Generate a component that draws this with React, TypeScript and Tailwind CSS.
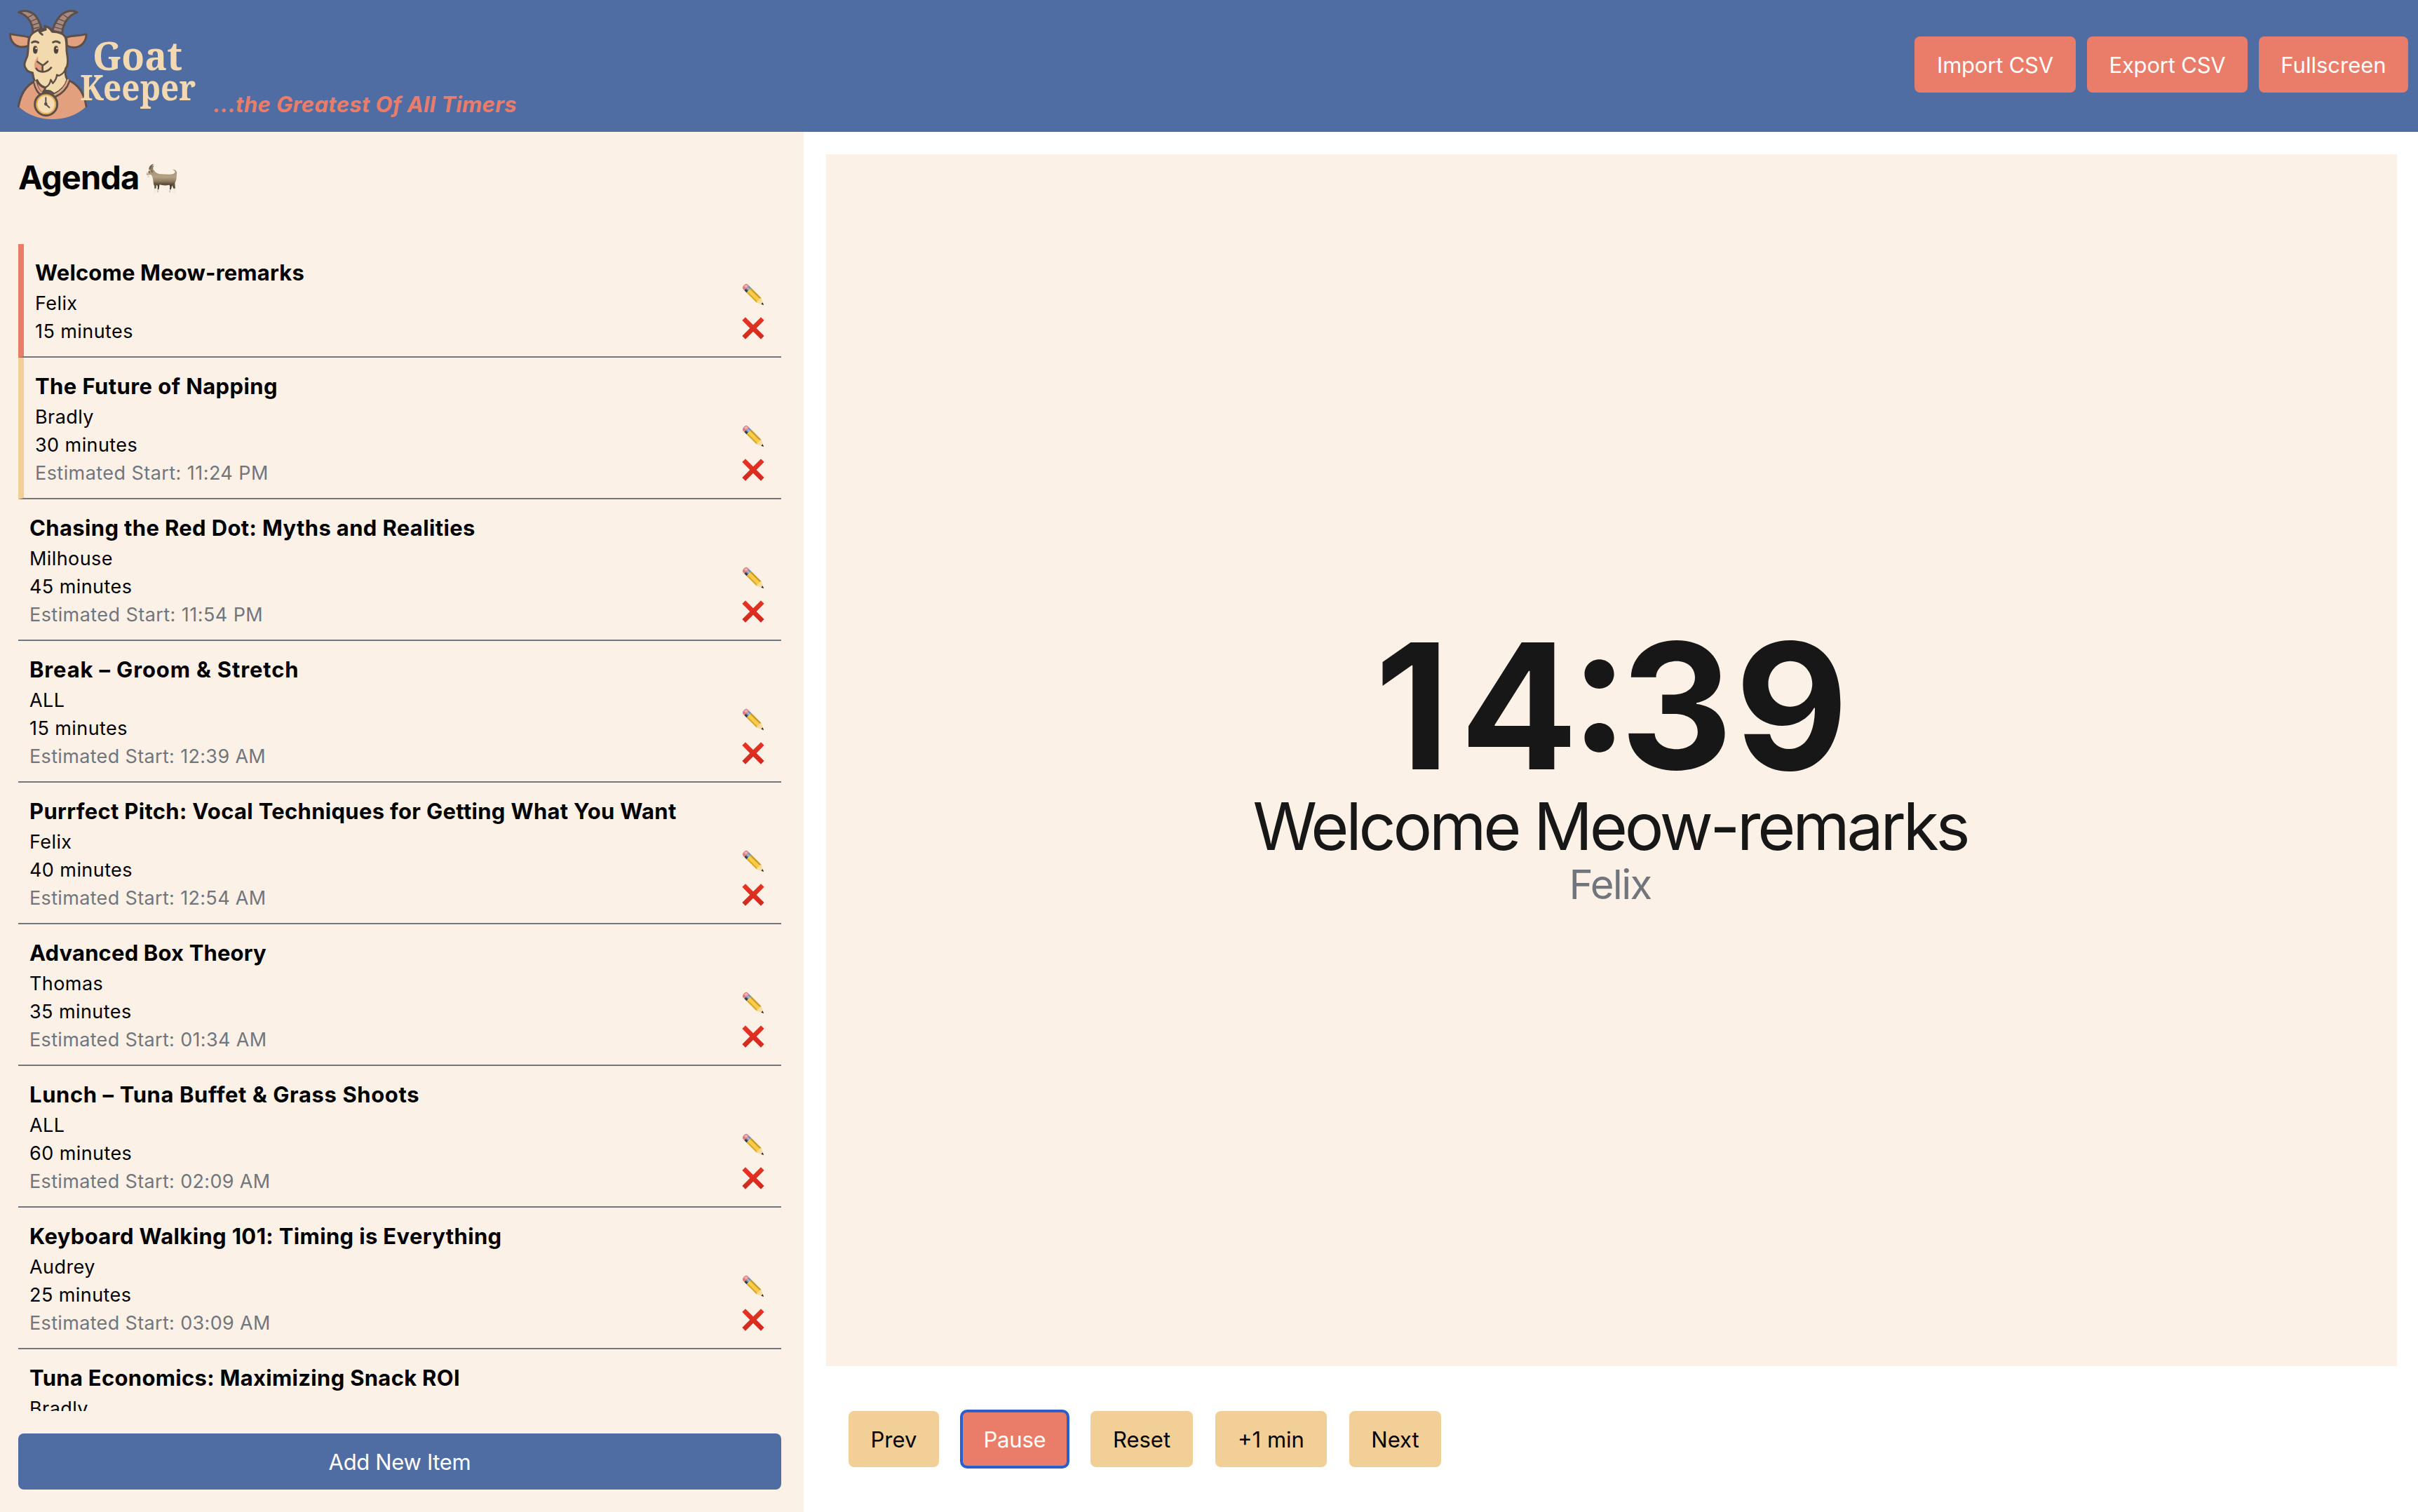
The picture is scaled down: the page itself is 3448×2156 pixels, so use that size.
type AgendaItem = {
  title: string;
  tracking: string;
  speaker: string;
  minutes: number;
  start?: string;
};

const agenda: AgendaItem[] = [
  { title: "Welcome Meow-remarks", tracking: "tracking-[0.16px]", speaker: "Felix", minutes: 15 },
  { title: "The Future of Napping", tracking: "tracking-[0.42px]", speaker: "Bradly", minutes: 30, start: "11:24 PM" },
  { title: "Chasing the Red Dot: Myths and Realities", tracking: "tracking-[0.35px]", speaker: "Milhouse", minutes: 45, start: "11:54 PM" },
  { title: "Break – Groom & Stretch", tracking: "tracking-[0.85px]", speaker: "ALL", minutes: 15, start: "12:39 AM" },
  { title: "Purrfect Pitch: Vocal Techniques for Getting What You Want", tracking: "tracking-[0.31px]", speaker: "Felix", minutes: 40, start: "12:54 AM" },
  { title: "Advanced Box Theory", tracking: "tracking-[0.15px]", speaker: "Thomas", minutes: 35, start: "01:34 AM" },
  { title: "Lunch – Tuna Buffet & Grass Shoots", tracking: "tracking-[0.6px]", speaker: "ALL", minutes: 60, start: "02:09 AM" },
  { title: "Keyboard Walking 101: Timing is Everything", tracking: "tracking-[0.35px]", speaker: "Audrey", minutes: 25, start: "03:09 AM" },
  { title: "Tuna Economics: Maximizing Snack ROI", tracking: "tracking-[0.3px]", speaker: "Bradly", minutes: 20, start: "03:34 AM" },
];

function Logo() {
  return (
    <svg width="300" height="188" viewBox="0 0 900 564" className="block shrink-0" role="img" aria-label="Goat Keeper">
      <g stroke="#5b4f48" strokeWidth="9" strokeLinejoin="round" strokeLinecap="round">
        {/* shoulders */}
        <path
          d="M79 455 C88 405 110 366 150 347 L292 343 C335 360 362 402 369 455 C330 494 275 510 221 510 C165 509 118 491 79 455 Z"
          fill="#e3a07f"
          stroke="none"
        />
        <path d="M79 455 C88 405 110 366 150 347 M292 343 C335 360 362 402 369 455" fill="none" />
        {/* horns */}
        <path d="M80 53 C108 38 145 52 161 80 C171 98 176 114 179 134 L141 140 C141 100 121 66 80 53 Z" fill="#a98880" />
        <path d="M330 53 C302 38 266 52 248 80 C235 98 229 114 224 132 L266 142 C269 100 292 66 330 53 Z" fill="#a98880" />
        <path
          d="M121 74 L138 64 M131 92 L158 80 M138 108 L167 98 M141 123 L174 115 M289 75 L273 65 M279 92 L253 82 M271 109 L241 99 M267 125 L233 116"
          fill="none"
          strokeWidth="4"
        />
        {/* ears */}
        <path d="M124 160 C98 151 70 152 43 145 C43 180 68 202 96 201 C106 201 115 199 122 195 Z" fill="#e3a07f" />
        <path d="M284 160 C310 151 340 154 369 146 C370 178 346 203 316 203 C304 203 294 199 286 195 Z" fill="#e3a07f" />
        {/* head and neck */}
        <path
          d="M163 128 C150 136 130 142 125 165 C119 190 122 215 117 239 C111 257 99 271 107 287 C113 297 116 309 139 311 C143 327 142 341 152 353 L158 345 C164 358 178 372 194 375 L190 388 L214 390 L232 402 C262 388 281 370 288 341 C279 326 278 305 281 293 C294 279 291 256 288 237 C281 211 289 177 278 156 C267 141 247 137 225 136 C220 122 208 115 192 112 L195 127 L177 124 L171 137 Z"
          fill="#f3d9ae"
        />
        <path d="M163 128 L172 124 L178 133 L195 126 L192 112 C206 116 216 123 222 134 M171 140 L181 148" fill="none" />
        {/* beard */}
        <path
          d="M139 311 C142 328 145 340 152 352 L159 342 C166 358 178 370 194 374 C206 369 214 362 217 341 L226 356 C237 344 243 332 243 320 L252 324 C268 317 278 306 282 290"
          fill="none"
          strokeWidth="7"
        />
        {/* lanyard */}
        <path d="M150 353 C156 378 164 396 181 404 M292 346 C282 378 260 398 234 410" fill="none" strokeWidth="18" strokeLinecap="butt" />
        <path d="M151 350 C157 376 165 392 182 401 M291 342 C281 375 259 395 232 407" fill="none" stroke="#e3a07f" strokeWidth="8" />
        {/* muzzle shading */}
        <path
          d="M162 241 C146 262 143 284 151 296 C158 304 170 306 181 303 L181 279 C167 276 160 268 164 260 Z"
          fill="#e3a07f"
          stroke="none"
        />
        {/* face */}
        <path d="M137 182 C145 176 156 177 164 182 M227 181 C236 175 247 177 255 183" fill="none" />
        <path d="M160 264 L177 276 C181 279 186 279 190 275 L204 263 M182 279 L182 303 M155 293 C165 311 199 314 219 289" fill="none" strokeWidth="8" />
        <ellipse cx="151" cy="213" rx="8" ry="15" fill="#4a3e3b" strokeWidth="4" />
        <ellipse cx="240" cy="213" rx="8" ry="15" fill="#4a3e3b" strokeWidth="4" />
        {/* stopwatch */}
        <path d="M186 390 L209 390 L209 401 L186 401 Z" fill="#7b675a" />
        <circle cx="197" cy="446" r="48" fill="#e5ac52" />
        <circle cx="197" cy="446" r="37" fill="#f5dcb3" stroke="none" />
        <path d="M196 418 L196 446 L211 460" fill="none" strokeWidth="6" />
        <circle cx="196" cy="445" r="5" fill="#5b4f48" strokeWidth="4" />
      </g>
      <circle cx="155" cy="207" r="4" fill="#f3d9ae" />
      <circle cx="244" cy="207" r="4" fill="#f3d9ae" />
      <g fill="#f3d9b1" fontWeight="700" className="font-['Noto_Serif','DejaVu_Serif',serif]">
        <text x="396" y="301" fontSize="167" textLength="384" lengthAdjust="spacingAndGlyphs">
          Goat
        </text>
        <text x="343" y="430" fontSize="155" textLength="495" lengthAdjust="spacingAndGlyphs">
          Keeper
        </text>
      </g>
    </svg>
  );
}

function GoatIcon() {
  return (
    <svg width="46" height="44" viewBox="0 0 138 132" className="block shrink-0" aria-hidden="true">
      <defs>
        <linearGradient id="fur" x1="0" y1="0" x2="0" y2="1">
          <stop offset="0" stopColor="#a39176" />
          <stop offset="0.4" stopColor="#b5a183" />
          <stop offset="0.62" stopColor="#8f7c61" />
          <stop offset="0.75" stopColor="#5f503e" />
        </linearGradient>
      </defs>
      {/* far legs */}
      <path d="M102 82 L106 100 L105 112 L110 112 L113 102 L116 82 Z M48 84 L54 100 L53 112 L58 112 L60 102 L62 84 Z" fill="#40362c" />
      <path d="M105 112 L110 112 L108 124 L101 124 Z M53 112 L58 112 L57 124 L50 124 Z" fill="#cfc6b8" />
      {/* horns */}
      <path d="M16 27 C15 13 24 4 37 2 C29 9 26 18 25 26 Z" fill="#6f624f" />
      <path d="M23 26 C23 17 29 9 38 8 C33 15 34 22 34 29 Z" fill="#8a7b64" />
      {/* body */}
      <path
        d="M22 27 C30 22 36 27 40 32 C46 41 56 45 68 46 L104 47 C113 47 121 46 125 42 C130 36 128 30 117 27 C130 24 138 36 135 47 C135 64 132 76 127 84 L129 108 L121 108 L119 102 L112 90 C98 95 77 96 63 91 L48 94 L46 108 L39 108 L40 98 C33 87 36 72 31 59 C28 50 26 49 21 48 L14 47 L9 51 C4 48 5 44 8 40 L15 32 Z"
        fill="url(#fur)"
      />
      <path d="M26 27 C33 28 33 33 30 42 C27 38 25 33 26 27 Z" fill="#6f624f" />
      {/* beard */}
      <path d="M10 49 L19 48 L15 63 L11 57 Z" fill="#dedad0" />
      {/* near shins */}
      <path d="M39 107 L46 107 L44 125 L35 127 L38 121 Z M121 107 L129 107 L129 127 L118 127 L122 121 Z" fill="#efe9df" />
      <path d="M10 36 L15 34 L13 44 L9 45 Z" fill="#e5e0d6" />
      <circle cx="17" cy="37" r="2.5" fill="#2e2822" />
    </svg>
  );
}

function PencilIcon() {
  return (
    <svg width="32" height="32" viewBox="0 0 96 96" className="block" aria-hidden="true">
      <g transform="rotate(45 48 48)">
        <path d="M0 34 h10 v28 h-10 C-10 60 -12 36 0 34 Z" fill="#d97d80" />
        <path d="M-1 38 h8 v12 h-12 C-6 45 -5 40 -1 38 Z" fill="#f3b0b2" />
        <path d="M9 34 h13 v28 h-13 Z" fill="#7590b8" />
        <path d="M9 41 h13 v7 h-13 Z" fill="#a5b6cf" />
        <path d="M9 53 h13 v9 h-13 Z" fill="#3a3b41" />
        <path d="M22 34 h62 v28 h-62 Z" fill="#f8cd45" />
        <path d="M22 34 h62 v7 h-62 Z" fill="#c9982f" />
        <path d="M22 56 h62 v6 h-62 Z" fill="#dba62f" />
        <path d="M84 34 L111 48 L84 62 L79 56 L83 48 L79 40 Z" fill="#f6dca0" />
        <path d="M101 43 L112 48 L101 53 Z" fill="#2a2626" />
      </g>
    </svg>
  );
}

function CrossIcon() {
  return (
    <svg width="32" height="32" viewBox="0 0 96 96" className="block" aria-hidden="true">
      <defs>
        <linearGradient id="cross" x1="0" y1="0" x2="0" y2="1">
          <stop offset="0" stopColor="#e93323" />
          <stop offset="1" stopColor="#d02a1e" />
        </linearGradient>
      </defs>
      <path
        d="M15 1 L48 34 L81 1 L95 14 L62 48 L95 81 L81 95 L48 62 L15 95 L1 81 L34 48 L1 14 Z"
        fill="url(#cross)"
      />
    </svg>
  );
}

const stripes = ["border-l-8 border-l-[#e97d69]", "border-l-8 border-l-[#f2cf97]"];

function AgendaRow({ item, index }: { item: AgendaItem; index: number }) {
  return (
    <li className={`flex shrink-0 items-end justify-between border-b-2 border-b-[#71767d] p-4 ${stripes[index] ?? ""}`}>
      <div className="mt-px -mb-px text-[27px] leading-[40px] tracking-[0.42px]">
        <h3 className={`text-[31px] leading-[48px] font-bold whitespace-nowrap ${item.tracking}`}>{item.title}</h3>
        <p>{item.speaker}</p>
        <p>{item.minutes} minutes</p>
        {item.start && (
          <p className={`text-[#71767d] ${item.start.endsWith("AM") ? "tracking-[0.34px]" : "tracking-[0.44px]"}`}>
            Estimated Start: {item.start}
          </p>
        )}
      </div>
      <div className="flex flex-col">
        <button aria-label="Edit" className="grid size-12 place-items-center">
          <PencilIcon />
        </button>
        <button aria-label="Delete" className="grid size-12 place-items-center">
          <CrossIcon />
        </button>
      </div>
    </li>
  );
}

const button = "h-20 rounded-lg pt-px text-center text-[31px] leading-[48px] whitespace-nowrap";

export default function App() {
  return (
    <div className="flex h-[2156px] w-[3448px] flex-col overflow-hidden bg-white font-['Inter',sans-serif] text-black">
      <header className="flex h-[188px] shrink-0 items-center bg-[#506da3] pr-[14px]">
        <Logo />
        <p className="self-end pb-[18px] pl-1 text-[31px] leading-[42px] font-bold tracking-[0.35px] text-[#e97d69] italic">
          ...the Greatest Of All Timers
        </p>
        <div className="ml-auto flex gap-4 pb-1 text-white">
          <button className={`${button} w-[230px] bg-[#e97d69] tracking-[-0.2px]`}>Import CSV</button>
          <button className={`${button} w-[229px] bg-[#e97d69] tracking-[-0.2px]`}>Export CSV</button>
          <button className={`${button} w-[213px] bg-[#e97d69]`}>Fullscreen</button>
        </div>
      </header>
      <div className="flex min-h-0 flex-1">
        <aside className="flex w-[1146px] shrink-0 flex-col bg-[#fcf1e6] py-8 pr-8 pl-[26px]">
          <h2 className="flex h-[66px] items-center gap-[9px] text-[47px] leading-[66px] font-bold tracking-[-0.92px]">
            Agenda
            <span className="pt-[3px]">
              <GoatIcon />
            </span>
          </h2>
          <ul className="mt-[62px] flex h-[1664px] shrink-0 flex-col overflow-hidden">
            {agenda.map((item, i) => (
              <AgendaRow key={item.title} item={item} index={i} />
            ))}
          </ul>
          <button className={`${button} mt-8 shrink-0 bg-[#506da3] tracking-[-0.34px] text-white`}>Add New Item</button>
        </aside>
        <main className="flex min-w-0 flex-1 flex-col pt-8 pr-[30px] pl-8">
          <section className="flex h-[1728px] flex-col items-center justify-center bg-[#fcf1e6] pt-[11px] text-[#171717]">
            <div className="text-[249px] leading-[246px] font-bold [font-feature-settings:'case']">
              <span className="tracking-[14px]">1</span>
              <span className="tracking-[-11px]">4</span>
              <span className="tracking-[-12px]">:</span>
              <span className="tracking-[3px]">3</span>9
            </div>
            <div className="pr-1 text-[93px] leading-[96px] tracking-[-4.24px]">Welcome Meow-remarks</div>
            <div className="pt-[2px] pr-1 text-[58px] leading-[67px] tracking-[-1.7px] text-[#71767d]">Felix</div>
          </section>
          <div className="flex gap-8 px-8 pt-16">
            <button className={`${button} w-[129px] bg-[#f2cf97]`}>Prev</button>
            <button
              className={`${button} w-[152px] bg-[#e97d69] tracking-[-0.2px] text-white outline-4 -outline-offset-2 outline-[#295fcb]`}
            >
              Pause
            </button>
            <button className={`${button} w-[146px] bg-[#f2cf97]`}>Reset</button>
            <button className={`${button} w-[159px] bg-[#f2cf97]`}>+1 min</button>
            <button className={`${button} w-[131px] bg-[#f2cf97]`}>Next</button>
          </div>
        </main>
      </div>
    </div>
  );
}
